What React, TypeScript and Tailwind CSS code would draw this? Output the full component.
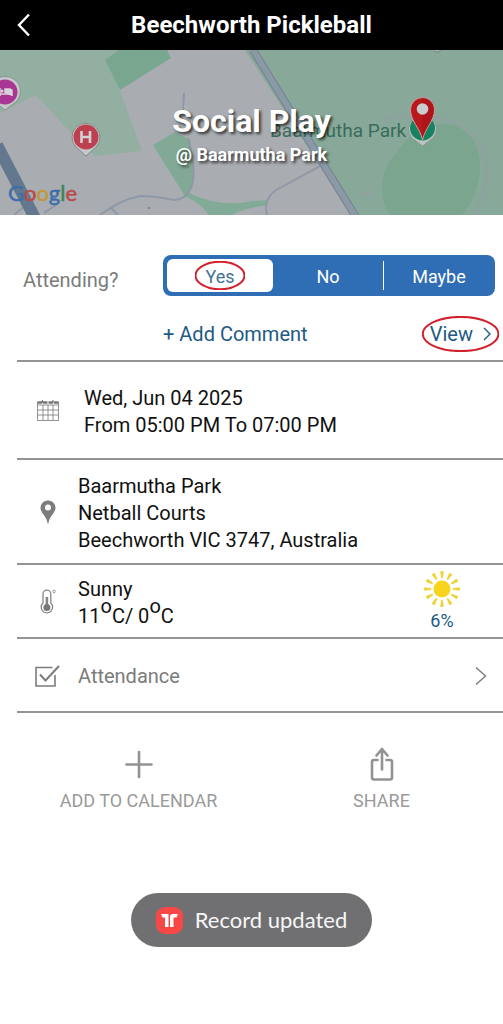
import { useState } from "react";

const rule = "border-b-2 border-[#949494]";

function MapArt() {
  return (
    <svg viewBox="0 50 503 165" preserveAspectRatio="xMidYMid slice" className="absolute inset-0 h-full w-full" aria-hidden="true">
      <rect y="50" width="503" height="165" fill="#a9adb1" />
      <path d="M0 50H120L106 60L120 90L142 151L95 156L70 132L36 95L0 113Z" fill="#93afa2" />
      <path d="M105 60L119 50H167L171 58L120 90Z" fill="#79a68f" />
      <path d="M153 145L175 132L190 140Q196 165 192 185L186 198Z" fill="#82a995" />
      <path d="M189 193Q220 208 252 201L268 200V205Q240 209 232 215H209Q200 203 187 197Z" fill="#82ab97" />
      <path d="M245 50H503V215H352Z" fill="#88a999" />
      <path d="M396 153C408 137 420 124 445 124C468 124 480 145 480 166C480 190 470 205 462 215H390C378 198 379 172 396 153Z" fill="#7ba58f" />
      <path d="M362 193Q366 196 373 191M384 119Q398 115 415 118Q440 112 464 128Q489 148 486 180Q483 200 475 215" fill="none" stroke="#8f9fa2" strokeWidth="4" opacity=".65" />
      <path d="M184 93L183 110M188 138Q198 175 190 190Q186 199 174 200Q155 196 140 196Q120 200 100 215M111 208L118 215M14 215L25 206M44 213L56 205" fill="none" stroke="#8e98a6" strokeWidth="2" />
      <path d="M322 165L276 190Q263 199 267 215" fill="none" stroke="#9199a6" strokeWidth="2" />
      <path d="M253 50L356 217" stroke="#74838e" strokeWidth="8" />
      <path d="M253 50L356 217" stroke="#8b98a5" strokeWidth="6" />
      <path d="M-3 145L37 222" stroke="#63788f" strokeWidth="12" />
      <circle cx="437" cy="47" r="5" fill="#b1b5b8" stroke="#75837d" />
      <circle cx="149" cy="208" r="1" fill="#747a82" />

      <path d="M5 110L-4 103A15 15 0 1 1 17 101Z" fill="#c4c8ca" stroke="#8a918f" strokeWidth="1" />
      <circle cx="5" cy="92" r="12.5" fill="#aa3693" />
      <path d="M0 88V96M0 94H12M12 96V91Q12 89 9 89H5V93" fill="#d7d3d8" stroke="#d7d3d8" strokeWidth="1.5" />
      <circle cx="2" cy="91" r="1.5" fill="#d7d3d8" />

      <path d="M86 156L76 147A14 14 0 1 1 96 147Z" fill="#c4c8ca" stroke="#828b88" strokeWidth="1" />
      <circle cx="86" cy="137" r="12.5" fill="#bd4050" />
      <path d="M81.5 131V143M90 131V143M81.5 137H90" stroke="#d2d0d2" strokeWidth="2.6" />

      <path d="M422.500 146L412 138A14 14 0 1 1 433 138Z" fill="#bcc4c1" stroke="#879590" strokeWidth="1" />
      <circle cx="422.5" cy="128" r="12.5" fill="#168261" />
      <path d="M422.500 140C420 128 410.500 121 410.500 109.500A12 12 0 0 1 434.500 109.500C434.500 121 425 128 422.500 140Z" fill="#b9181d" stroke="#c5a19d" strokeWidth="1" />
      <path d="M422.500 139C425 127 434 120 434 109.500A11.500 11.500 0 0 0 422.500 98Z" fill="#9d1217" opacity=".4" />
      <circle cx="422.500" cy="109" r="5.800" fill="#c9cccd" />
    </svg>
  );
}

function Ring() {
  return (
    <svg viewBox="0 0 100 40" preserveAspectRatio="none" className="h-full w-full" aria-hidden="true">
      <ellipse cx="50" cy="20" rx="49" ry="19" fill="none" stroke="#d3202d" strokeWidth="2" vectorEffect="non-scaling-stroke" />
    </svg>
  );
}

function CalendarIcon() {
  return (
    <svg width="22" height="22" viewBox="0 0 22 22" fill="none" stroke="#777" aria-hidden="true">
      <path d="M.5 3V21.500H21.500V3M.5 6H21.500M.5 11H21.500M.5 16H21.500M6 6V21M11 6V21M16 6V21" strokeWidth=".8" />
      <path d="M.5 3.500H21.500" strokeWidth="2.500" strokeDasharray="4.500 1" />
      <path d="M5.500 1V4M16 1V4" strokeWidth="1.200" />
    </svg>
  );
}

function PinIcon() {
  return (
    <svg width="16" height="24" viewBox="0 0 16 24" aria-hidden="true">
      <path fillRule="evenodd" d="M8 0.500A7.300 7.300 0 0 0 .5 7.800C.5 13 6.800 16 7.600 23.500H8.400C9.200 16 15.500 13 15.500 7.800A7.300 7.300 0 0 0 8 .5ZM8 4.500A3 3 0 1 1 8 10.500A3 3 0 0 1 8 4.500Z" fill="#7d7d7d" />
    </svg>
  );
}

function ThermometerIcon() {
  return (
    <svg width="16" height="25" viewBox="0 0 16 25" fill="none" stroke="#858585" aria-hidden="true">
      <path d="M3 14V5A3.900 3.900 0 0 1 10.800 5V14A5.700 5.700 0 1 1 3 14Z" strokeWidth="1.300" />
      <path d="M6.900 8V18" strokeWidth="2.600" />
      <circle cx="6.900" cy="18.500" r="3.500" fill="#777" stroke="none" />
      <circle cx="14" cy="2.500" r="1.300" strokeWidth=".8" />
    </svg>
  );
}

function CheckIcon() {
  return (
    <svg width="25" height="22" viewBox="0 0 25 22" fill="none" stroke="#7c7c7c" strokeWidth="1.600" aria-hidden="true">
      <path d="M17.500 2.500H1V21H20V10" />
      <path d="M5 9.500L10.500 15.500L24 1" strokeWidth="2" />
    </svg>
  );
}

function SunIcon() {
  const angles = [0, 30, 60, 90, 120, 150, 180, 210, 240, 270, 300, 330];
  return (
    <svg width="36" height="36" viewBox="0 0 36 36" aria-hidden="true">
      <circle cx="18" cy="18" r="8.500" fill="#f8d51c" />
      {angles.map((a) => (
        <path key={a} d="M17.500 7L16.700 .5H19.300L18.500 7Z" fill="#ecd22f" stroke="#ecd22f" strokeWidth=".7" transform={`rotate(${a} 18 18)`} />
      ))}
    </svg>
  );
}

function ShareIcon() {
  return (
    <svg width="24" height="34" viewBox="0 0 24 34" fill="none" stroke="#929292" strokeWidth="2.600" strokeLinecap="round" strokeLinejoin="round" aria-hidden="true">
      <path d="M7.500 13H4Q2 13 2 15V30.500Q2 32.500 4 32.500H20Q22 32.500 22 30.500V15Q22 13 20 13H16.500" />
      <path d="M12 22.500V2M6.500 8.500L12 2L17.500 8.500" />
    </svg>
  );
}

export default function App() {
  const [choice, setChoice] = useState("Yes");
  return (
    <div className="min-h-screen bg-white font-['Roboto',sans-serif] text-xl text-[#111]">
      <header className="grid h-[50px] grid-cols-[48px_1fr_48px] items-center bg-black text-white">
        <button type="button" aria-label="Back" className="flex justify-center">
          <svg width="14" height="24" viewBox="0 0 14 24" fill="none" stroke="currentColor" strokeWidth="2.400" aria-hidden="true">
            <path d="M12 1.500L2 12L12 22.500" />
          </svg>
        </button>
        <h1 className="text-center text-2xl font-bold">Beechworth Pickleball</h1>
      </header>

      <section className="relative h-[165px] overflow-hidden">
        <MapArt />
        <span className="absolute left-[270px] top-[69px] text-[19px] leading-6 text-[#386c5b]">Baarmutha Park</span>
        <span className="absolute bottom-2.5 left-2 font-['Lato',sans-serif] text-[22px] leading-6 [-webkit-text-stroke:0.5px_currentColor]">
          <span className="text-[#3d6da9]">G</span>
          <span className="text-[#b94b49]">o</span>
          <span className="text-[#bd993a]">o</span>
          <span className="text-[#3d6da9]">g</span>
          <span className="text-[#3d8457]">l</span>
          <span className="text-[#b94b49]">e</span>
        </span>
        <div className="relative flex h-full flex-col items-center justify-center pt-1 font-bold text-white [text-shadow:2px_2px_3px_rgba(0,0,0,0.7)]">
          <h2 className="text-[32px] leading-10">Social Play</h2>
          <p className="text-lg leading-7">@ Baarmutha Park</p>
        </div>
      </section>

      <main className="pl-[17px]">
        <section className={`grid h-[147px] grid-cols-[146px_1fr] content-start pt-10 ${rule}`}>
          <span id="attending" className="self-center pl-1.5 pt-2 text-[#7b7b7b]">Attending?</span>
          <div role="group" aria-labelledby="attending" className="mr-2 grid h-[41px] grid-cols-[106fr_110fr_112fr] rounded-lg bg-[#2f6eb5] py-1 pl-1 text-lg text-white">
            {["Yes", "No", "Maybe"].map((label) => (
              <button
                key={label}
                type="button"
                aria-pressed={choice === label}
                onClick={() => setChoice(label)}
                className={`relative rounded-md pt-0.5 ${choice === label ? "bg-white text-[#42729b]" : ""}`}
              >
                {label}
                {label === "Yes" && (
                  <span className="absolute inset-x-7 inset-y-0.5">
                    <Ring />
                  </span>
                )}
                {label === "Maybe" && <span className="absolute inset-y-0.5 left-0 w-px bg-white" />}
              </button>
            ))}
          </div>
          <div className="col-start-2 mt-[18px] flex h-10 items-center justify-between pr-3 text-[#215a83]">
            <button type="button">+ Add Comment</button>
            <button type="button" className="relative flex items-center gap-2.5">
              View
              <svg width="8" height="14" viewBox="0 0 8 14" fill="none" stroke="currentColor" strokeWidth="1.400" aria-hidden="true">
                <path d="M1 1L7 7L1 13" />
              </svg>
              <span className="absolute -inset-x-2 -inset-y-1">
                <Ring />
              </span>
            </button>
          </div>
        </section>

        <section className={`flex h-[98px] items-center ${rule}`}>
          <span className="flex w-[61px] justify-center"><CalendarIcon /></span>
          <p className="pl-1.5 pt-1 leading-[27px]">
            Wed, Jun 04 2025
            <br />
            From 05:00 PM To 07:00 PM
          </p>
        </section>

        <section className={`flex h-[105px] items-center ${rule}`}>
          <span className="flex w-[61px] justify-center"><PinIcon /></span>
          <p className="pt-1 leading-[27px]">
            Baarmutha Park
            <br />
            Netball Courts
            <br />
            Beechworth VIC 3747, Australia
          </p>
        </section>

        <section className={`flex h-[74px] items-center ${rule}`}>
          <span className="flex w-[61px] justify-center"><ThermometerIcon /></span>
          <div className="pt-1 leading-[27px]">
            <p>Sunny</p>
            <p>
              11<sup className="text-xl leading-none">o</sup>C/ 0<sup className="text-xl leading-none">o</sup>C
            </p>
          </div>
          <div className="ml-auto mr-[43px] flex flex-col items-center pt-1 text-lg leading-7 text-[#215a83]">
            <SunIcon />
            6%
          </div>
        </section>

        <button type="button" className={`flex h-[74px] w-full items-center pt-0.5 text-left text-[#7b7b7b] ${rule}`}>
          <span className="flex w-[61px] justify-center"><CheckIcon /></span>
          Attendance
          <svg className="ml-auto mr-4" width="12" height="20" viewBox="0 0 12 20" fill="none" stroke="#858585" strokeWidth="1.600" aria-hidden="true">
            <path d="M1 1.500L10.500 10L1 18.500" />
          </svg>
        </button>
      </main>

      <nav className="grid grid-cols-2 pl-[17px] pt-[34px] text-lg leading-6 text-[#9a9a9a]">
        <button type="button" className="flex flex-col items-center gap-2">
          <svg width="28" height="34" viewBox="0 0 28 34" fill="none" stroke="#929292" strokeWidth="2.600" strokeLinecap="round" aria-hidden="true">
            <path d="M14 5V30M1.500 17.500H26.500" />
          </svg>
          ADD TO CALENDAR
        </button>
        <button type="button" className="flex flex-col items-center gap-2">
          <ShareIcon />
          SHARE
        </button>
      </nav>

      <div role="status" className="mx-auto mt-20 flex h-[54px] w-fit items-center gap-3 rounded-full bg-[#707072] px-[25px] font-['Lato',sans-serif] text-[22px] text-[#f7f7f7]">
        <svg width="27" height="27" viewBox="0 0 27 27" aria-hidden="true">
          <rect width="27" height="27" rx="9" fill="#f84845" />
          <path d="M5 7H12.500V20H9V10.500H6.500ZM14 20V10Q14 7 17 7H22L20.500 10.500H17.500V20Z" fill="#fff" />
        </svg>
        Record updated
      </div>
    </div>
  );
}
